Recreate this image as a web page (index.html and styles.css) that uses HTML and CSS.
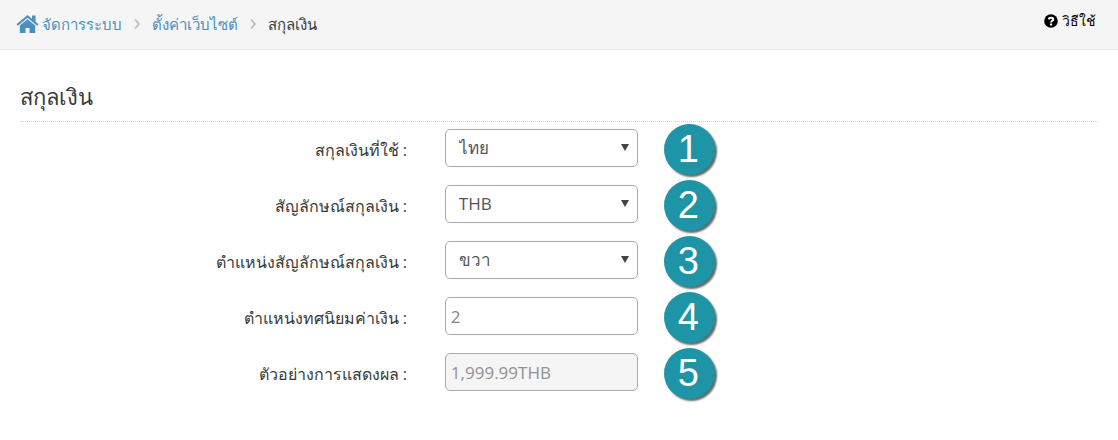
FILE: index.html
```html
<!DOCTYPE html>
<html lang="th">
<head>
<meta charset="utf-8">
<title>สกุลเงิน</title>
<link rel="stylesheet" href="styles.css">
</head>
<body>
<header class="topbar">
  <nav class="crumbs" aria-label="breadcrumb">
    <a class="crumb home" href="#"><svg class="home-icon" viewBox="0 0 22 18" aria-hidden="true"><path d="M11 0 0 9.200l1.400 1.500L11 2.800l9.600 7.900L22 9.200 19 6.700V.5h-3.500v3.200z"/><path d="M11 4.200 3.300 10.400V18H9v-5h4v5h5.700v-7.600z"/></svg>จัดการระบบ</a>
    <svg class="chevron" viewBox="0 0 6 10" aria-hidden="true"><path d="M1 .5 5 5 1 9.500"/></svg>
    <a class="crumb" href="#">ตั้งค่าเว็บไซต์</a>
    <svg class="chevron" viewBox="0 0 6 10" aria-hidden="true"><path d="M1 .5 5 5 1 9.500"/></svg>
    <span class="current">สกุลเงิน</span>
  </nav>
  <a class="help" href="#"><svg class="help-icon" viewBox="0 0 14 14" aria-hidden="true"><circle cx="7" cy="7" r="6.800"/><path d="M4.800 5.300C5 3.200 9.200 3.200 9.200 5.400 9.200 6.800 7.100 6.800 7.100 8.400M7.100 9.600v1.800"/></svg>วิธีใช้</a>
</header>
<main class="content">
  <h1 class="title">สกุลเงิน</h1>
  <form class="form">
    <div class="row">
      <label class="label" for="currency">สกุลเงินที่ใช้ :</label>
      <div class="control select-box"><select class="field" id="currency"><option>ไทย</option></select></div>
      <span class="marker">1</span>
    </div>
    <div class="row">
      <label class="label" for="symbol">สัญลักษณ์สกุลเงิน :</label>
      <div class="control select-box"><select class="field" id="symbol"><option>THB</option></select></div>
      <span class="marker">2</span>
    </div>
    <div class="row">
      <label class="label" for="position">ตำแหน่งสัญลักษณ์สกุลเงิน :</label>
      <div class="control select-box"><select class="field" id="position"><option>ขวา</option></select></div>
      <span class="marker">3</span>
    </div>
    <div class="row">
      <label class="label" for="decimals">ตำแหน่งทศนิยมค่าเงิน :</label>
      <div class="control"><input class="field" id="decimals" type="text" value="2"></div>
      <span class="marker">4</span>
    </div>
    <div class="row">
      <label class="label" for="sample">ตัวอย่างการแสดงผล :</label>
      <div class="control"><input class="field" id="sample" type="text" value="1,999.99THB" readonly></div>
      <span class="marker">5</span>
    </div>
  </form>
</main>
</body>
</html>
```
FILE: styles.css
```css
* { box-sizing: border-box; }
body {
  margin: 0;
  background: #fff;
  color: #393939;
  font: 15px/20px "Open Sans", "Noto Sans", sans-serif;
}
.topbar {
  display: flex;
  justify-content: space-between;
  align-items: center;
  padding: 14px 22px 15px 16px;
  background: #f5f5f5;
  border-bottom: 1px solid #e5e5e5;
}
.crumbs { display: flex; align-items: center; gap: 12px; }
.crumb { color: #4c8fbd; text-decoration: none; }
.home { display: flex; align-items: center; gap: 3px; }
.home-icon { width: 23px; height: 18px; fill: #4c8fbd; }
.chevron { width: 6px; height: 10px; fill: none; stroke: #b2b6bf; stroke-width: 1.5; }
.help {
  display: flex;
  align-items: center;
  gap: 4px;
  padding-bottom: 6px;
  color: #000;
  font-size: 14px;
  line-height: 14px;
  text-decoration: none;
}
.help-icon { width: 14px; height: 14px; fill: #000; }
.help-icon path { fill: none; stroke: #fff; stroke-width: 2; }
.content { padding: 31px 20px; }
.title {
  margin: 0 0 2px;
  padding-bottom: 9px;
  border-bottom: 1px dotted #d5d5d5;
  font-size: 22px;
  line-height: 31px;
  font-weight: 400;
}
.form { display: grid; gap: 5px; }
.row {
  display: grid;
  grid-template-columns: 37% 193px 51px;
  column-gap: 26px;
  align-items: start;
}
.label { padding: 16px 12px 0 0; font-size: 16px; text-align: right; }
.control { padding-top: 5px; }
.select-box { position: relative; }
.select-box::after {
  content: "";
  position: absolute;
  right: 9px;
  top: 20px;
  border: 4px solid transparent;
  border-top: 7px solid #444;
  border-bottom: 0;
  pointer-events: none;
}
.field {
  display: block;
  width: 100%;
  height: 38px;
  margin: 0;
  padding: 0 5px;
  border: 1px solid #aaa;
  border-radius: 5px;
  background: #fff;
  color: #858585;
  font: 17px/24px "Open Sans", "Noto Sans", sans-serif;
  appearance: none;
}
select.field { color: #555; padding: 0 13px; }
.field:read-only:not(select) { background: #f5f5f5; color: #939192; }
.marker {
  display: grid;
  place-items: center;
  width: 51px;
  height: 51px;
  padding: 0 2px 2px 0;
  border-radius: 50%;
  background: #1e95a6;
  box-shadow: 2px 2px 2px #666;
  color: #fff;
  font: 38px/40px "Liberation Sans", Arial, sans-serif;
}
```
